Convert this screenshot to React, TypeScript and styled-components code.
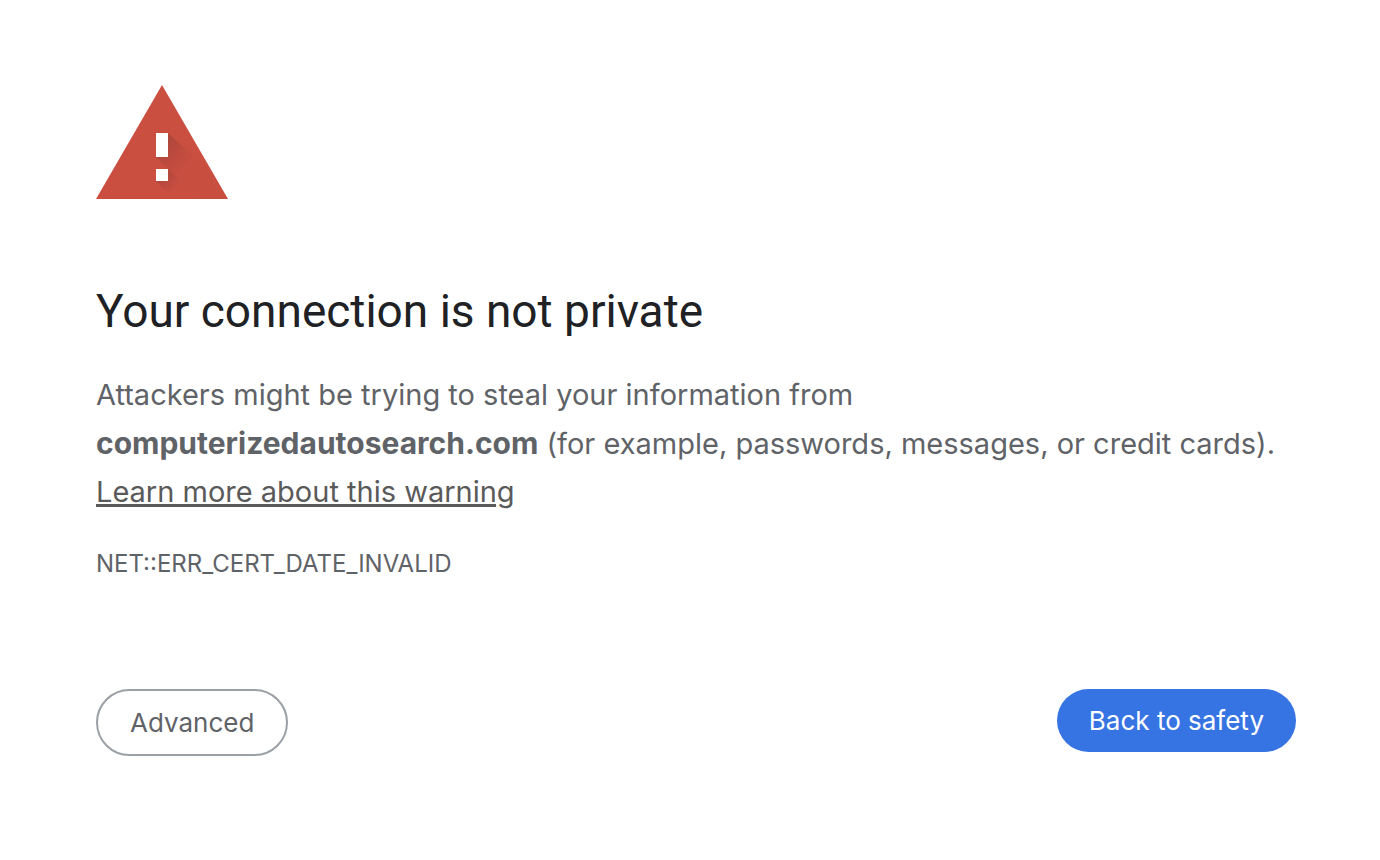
import React from 'react';
import styled, { createGlobalStyle } from 'styled-components';

const GlobalStyle = createGlobalStyle`
  * { box-sizing: border-box; }
  body {
    margin: 0;
    background: #fff;
    color: #5f6368;
    font-family: Inter, Roboto, "Liberation Sans", sans-serif;
  }
`;

const Page = styled.main`
  padding: 85px 84px 64px 96px;
`;

const WarningIcon = styled.svg`
  display: block;
  width: 132px;
  height: 114px;
`;

const Title = styled.h1`
  margin: 82px 0 0;
  font-family: Roboto, "Liberation Sans", sans-serif;
  font-size: 46px;
  font-weight: 400;
  line-height: 60px;
  color: #202124;
`;

const Message = styled.p`
  margin: 30px 0 0;
  font-size: 29px;
  line-height: 48px;
`;

const Line = styled.span`
  display: block;
`;

const Host = styled.strong`
  font-size: 30px;
`;

const LearnMore = styled.a`
  color: #5a5a5a;
  text-decoration: underline;
  text-decoration-thickness: 3px;
`;

const ErrorCode = styled.p`
  margin: 30px 0 0;
  font-size: 24px;
  line-height: 36px;
`;

const Actions = styled.div`
  display: flex;
  flex-wrap: wrap;
  justify-content: space-between;
  align-items: flex-start;
  gap: 24px;
  margin-top: 107px;
`;

const Button = styled.button<{ $primary?: boolean }>`
  padding: 15px 32px;
  border: ${(p) => (p.$primary ? '0' : '2px solid #9aa0a6')};
  border-radius: 34px;
  background: ${(p) => (p.$primary ? '#3574e2' : '#fff')};
  color: ${(p) => (p.$primary ? '#fff' : '#5f6368')};
  font-family: inherit;
  font-size: 26px;
  line-height: 33px;
  cursor: pointer;
`;

export default function App() {
  return (
    <>
      <GlobalStyle />
      <Page>
        <WarningIcon viewBox="0 0 132 114" role="img" aria-label="Warning">
          <defs>
            <linearGradient id="barShade" x1="66" y1="60" x2="89" y2="83" gradientUnits="userSpaceOnUse">
              <stop offset="0" stopColor="#3e2723" stopOpacity="0.2" />
              <stop offset="0.5" stopColor="#3e2723" stopOpacity="0.1" />
              <stop offset="1" stopColor="#3e2723" stopOpacity="0.02" />
            </linearGradient>
            <linearGradient id="dotShade" x1="66" y1="90" x2="80" y2="104" gradientUnits="userSpaceOnUse">
              <stop offset="0" stopColor="#3e2723" stopOpacity="0.2" />
              <stop offset="1" stopColor="#3e2723" stopOpacity="0.01" />
            </linearGradient>
          </defs>
          <path d="M66 0 132 114H0Z" fill="#cb4f41" />
          <path d="M72 48 117 89 132 114H102L60 72Z" fill="url(#barShade)" />
          <path d="M72 84 102 114H78L60 96Z" fill="url(#dotShade)" />
          <path d="M60 48H72V72H60ZM60 84H72V96H60Z" fill="#fff" />
        </WarningIcon>
        <Title>Your connection is not private</Title>
        <Message>
          <Line>Attackers might be trying to steal your information from</Line>
          <Line>
            <Host>computerizedautosearch.com</Host> (for example, passwords, messages, or credit cards).
          </Line>
          <LearnMore href="#learn-more">Learn more about this warning</LearnMore>
        </Message>
        <ErrorCode>NET::ERR_CERT_DATE_INVALID</ErrorCode>
        <Actions>
          <Button type="button">Advanced</Button>
          <Button type="button" $primary>Back to safety</Button>
        </Actions>
      </Page>
    </>
  );
}
